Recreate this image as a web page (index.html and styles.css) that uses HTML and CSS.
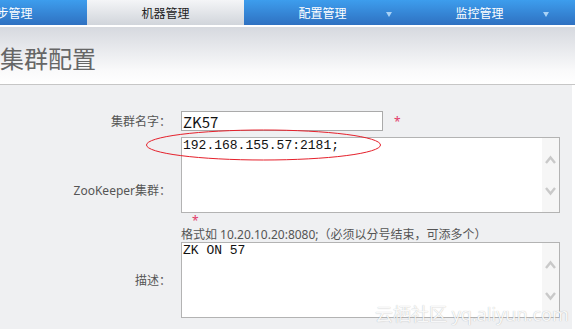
FILE: index.html
```html
<!DOCTYPE html>
<html lang="zh-CN">

<head>
    <meta charset="UTF-8">
    <meta name="viewport" content="width=device-width, initial-scale=1.0">
    <title>集群配置</title>

    <link rel="stylesheet" href="styles.css">
</head>

<body>
    <nav class="topNav">
        <a class="navTab navFirst">同步管理</a>
        <a class="navTab navAtivo">机器管理</a>
        <a class="navTab">配置管理<span class="navSeta"></span></a>
        <a class="navTab">监控管理<span class="navSeta"></span></a>
    </nav>

    <section class="cabecalho">
        <h1>集群配置</h1>
    </section>

    <section class="conteudo">
        <form class="formCluster" action="" method="post">
            <div class="linha">
                <label class="rotulo" for="iNome">集群名字：</label>
                <div class="campo campoInline">
                    <input class="campoEntrada" type="text" name="nome" id="iNome" value="ZK57">
                    <span class="obrigatorio">*</span>
                </div>
            </div>

            <div class="linha linhaZk">
                <label class="rotulo" for="iZk">ZooKeeper集群：</label>
                <div class="campo">
                    <div class="caixaTexto">
                        <textarea name="zk" id="iZk" readonly>192.168.155.57:2181;</textarea>
                        <div class="barraRolagem">
                            <svg width="11" height="9" viewBox="0 0 11 9"><polyline points="1,8 5.5,2.5 10,8" fill="none" stroke="#c9c9c9" stroke-width="2.4"/></svg>
                            <svg width="11" height="9" viewBox="0 0 11 9"><polyline points="1,1 5.5,6.5 10,1" fill="none" stroke="#c9c9c9" stroke-width="2.4"/></svg>
                        </div>
                    </div>
                    <div class="obrigatorio obrigatorioAbaixo">*</div>
                    <div class="dica">格式如 10.20.10.20:8080;（必须以分号结束，可添多个）</div>
                </div>
            </div>

            <div class="linha">
                <label class="rotulo" for="iDesc">描述：</label>
                <div class="campo">
                    <div class="caixaTexto">
                        <textarea name="descricao" id="iDesc" readonly>ZK ON 57</textarea>
                        <div class="barraRolagem">
                            <svg width="11" height="9" viewBox="0 0 11 9"><polyline points="1,8 5.5,2.5 10,8" fill="none" stroke="#c9c9c9" stroke-width="2.4"/></svg>
                            <svg width="11" height="9" viewBox="0 0 11 9"><polyline points="1,1 5.5,6.5 10,1" fill="none" stroke="#c9c9c9" stroke-width="2.4"/></svg>
                        </div>
                    </div>
                </div>
            </div>
        </form>

        <!-- marcação em vermelho sobre o campo -->
        <svg class="marcaElipse" width="237" height="33" viewBox="0 0 237 33">
            <ellipse cx="118.5" cy="16" rx="117" ry="15" fill="none" stroke="#e5202b" stroke-width="1"/>
        </svg>
    </section>

    <div class="marcaDagua">云栖社区 yq.aliyun.com</div>
</body>

</html>
```

FILE: styles.css
```css
* {
    margin: 0;
    padding: 0;
    box-sizing: border-box;
    font-family: "Noto Sans", "Noto Sans CJK SC", sans-serif;
}

body {
    background-color: white;
    width: 575px;
    height: 333px;
    overflow: hidden;
    position: relative;
}

.topNav {
    display: flex;
    height: 27px;
    background: linear-gradient(#3d9ded, #2f71c1);
    border-bottom: 2px solid white;
    overflow: hidden;
}

.navTab {
    position: relative;
    flex: 0 0 157px;
    height: 25px;
    padding-top: 3px;
    line-height: 22px;
    text-align: center;
    font-size: 12px;
    color: white;
}

.navFirst {
    margin-left: -70px;
}

.navAtivo {
    background: linear-gradient(#f4f5f7, #d1d5db);
    color: #222;
}

.navSeta {
    position: absolute;
    right: 9px;
    top: 12px;
    border-left: 3px solid transparent;
    border-right: 3px solid transparent;
    border-top: 5px solid #a9d2f6;
}

.cabecalho {
    height: 58px;
    background: linear-gradient(#d6d9df, #f9f9fa 75%, white);
    border-bottom: 1px solid #c6c6c6;
}

h1 {
    padding-top: 16px;
    line-height: 30px;
    font-size: 24px;
    font-weight: normal;
    color: #666;
    font-family: "Noto Sans CJK SC", sans-serif;
}

.conteudo {
    position: relative;
    width: 572px;
    height: 244px;
    background-color: #eff0f2;
    padding-top: 26px;
}

.linha {
    display: flex;
}

.linhaZk {
    margin-top: 6px;
}

.rotulo {
    flex: 0 0 181px;
    align-self: center;
    padding-right: 10px;
    text-align: right;
    font-size: 12px;
    color: #555;
    white-space: nowrap;
}

.campoInline {
    display: flex;
    align-items: center;
}

.campoEntrada {
    width: 202px;
    height: 20px;
    border: 1px solid #aaa;
    padding: 0 1px;
    background-color: white;
    font-family: "Noto Sans CJK SC", sans-serif;
    font-size: 15px;
    color: #111;
    outline: none;
}

.obrigatorio {
    margin-left: 11px;
    font-size: 12px;
    color: #e23a68;
}

.obrigatorioAbaixo {
    margin-left: 11px;
    height: 15px;
    line-height: 15px;
}

.caixaTexto {
    display: flex;
    width: 379px;
    height: 76px;
    border: 1px solid #b3b3b3;
    background-color: white;
}

.caixaTexto textarea {
    flex: 1;
    border: none;
    resize: none;
    overflow: hidden;
    padding: 0 1px;
    font-family: "Liberation Mono", monospace;
    font-size: 13px;
    line-height: 15px;
    color: #111;
    outline: none;
    background: white;
}

.barraRolagem {
    flex: 0 0 17px;
    display: flex;
    flex-direction: column;
    justify-content: space-between;
    align-items: center;
    padding: 17px 0 16px;
    background-color: #f6f6f6;
}

.dica {
    height: 14px;
    line-height: 14px;
    font-size: 12px;
    color: #555;
    white-space: nowrap;
}

.marcaElipse {
    position: absolute;
    left: 145px;
    top: 44px;
}

.marcaDagua {
    position: absolute;
    left: 375px;
    top: 300px;
    font-size: 18px;
    color: rgba(255, 255, 255, 0.92);
    text-shadow: 0 0 1px rgba(0, 0, 0, 0.3);
    white-space: nowrap;
}
```
